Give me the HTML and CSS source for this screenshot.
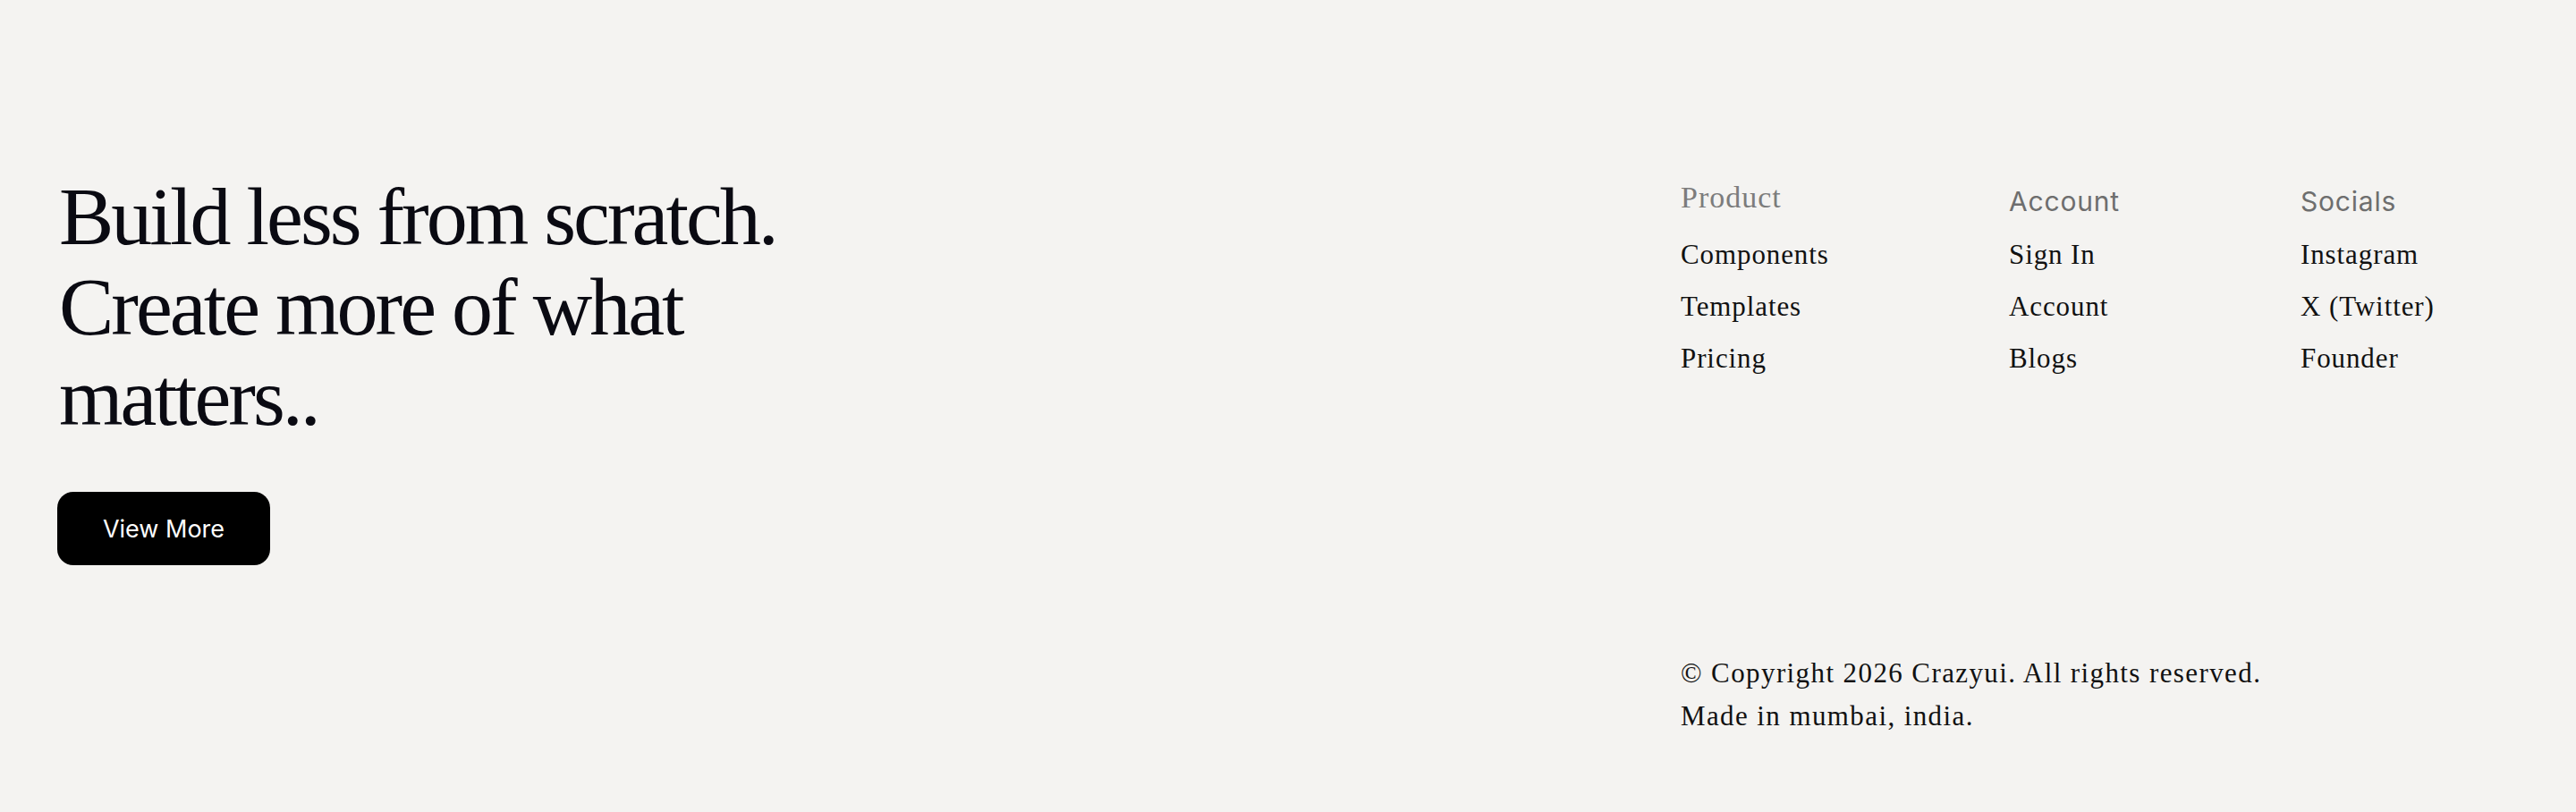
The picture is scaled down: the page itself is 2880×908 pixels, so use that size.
FILE: index.html
```html
<!DOCTYPE html>
<html lang="en">
<head>
<meta charset="utf-8">
<title>Crazyui Footer</title>
<link rel="stylesheet" href="styles.css">
</head>
<body>
<footer class="footer">
  <section class="intro">
    <h1 class="headline">Build less from scratch.<br>Create more of what<br>matters..</h1>
    <a class="btn" href="#">View More</a>
  </section>
  <section class="side">
    <nav class="cols">
      <div class="col">
        <div class="col-title serif">Product</div>
        <ul class="links">
          <li><a href="#">Components</a></li>
          <li><a href="#">Templates</a></li>
          <li><a href="#">Pricing</a></li>
        </ul>
      </div>
      <div class="col">
        <div class="col-title sans">Account</div>
        <ul class="links">
          <li><a href="#">Sign In</a></li>
          <li><a href="#">Account</a></li>
          <li><a href="#">Blogs</a></li>
        </ul>
      </div>
      <div class="col">
        <div class="col-title sans">Socials</div>
        <ul class="links">
          <li><a href="#">Instagram</a></li>
          <li><a href="#">X (Twitter)</a></li>
          <li><a href="#">Founder</a></li>
        </ul>
      </div>
    </nav>
    <div class="legal">
      <p>© Copyright 2026 Crazyui. All rights reserved.</p>
      <p>Made in mumbai, india.</p>
    </div>
  </section>
</footer>
</body>
</html>
```

FILE: styles.css
```css
html, body {
  margin: 0;
  padding: 0;
  background: #f4f3f1;
}

body {
  width: 2880px;
  height: 908px;
  overflow: hidden;
  font-family: "Liberation Serif", "Times New Roman", serif;
  color: #0b0b10;
}

.footer {
  display: flex;
  align-items: flex-start;
  padding: 192px 64px 0 66px;
}

.intro {
  flex: 1;
  display: flex;
  flex-direction: column;
  align-items: flex-start;
}

.headline {
  margin: 0;
  font-family: "Liberation Serif", "Times New Roman", serif;
  font-weight: 400;
  font-size: 92px;
  line-height: 101px;
  letter-spacing: -3px;
  color: #0a0a12;
}

.btn {
  margin-top: 55px;
  margin-left: -2px;
  display: flex;
  align-items: center;
  justify-content: center;
  width: 238px;
  height: 82px;
  box-sizing: border-box;
  border-radius: 18px;
  background: #000;
  color: #fff;
  text-decoration: none;
  font-family: Inter, "Liberation Sans", sans-serif;
  font-size: 27px;
  font-weight: 400;
}

.side {
  width: 937px;
  margin-top: 8px;
}

.cols {
  display: grid;
  grid-template-columns: 367px 326px auto;
}

.col-title {
  line-height: 41px;
  margin-bottom: 15px;
}

.col-title.serif {
  font-family: "Liberation Serif", "Times New Roman", serif;
  font-size: 34px;
  letter-spacing: 1px;
  color: #7c7c7c;
}

.col-title.sans {
  font-family: Inter, "Liberation Sans", sans-serif;
  font-size: 30px;
  letter-spacing: 0.8px;
  color: #6e6e6e;
  padding-top: 5px;
  margin-bottom: 10px;
}

.links {
  list-style: none;
  margin: 0;
  padding: 0;
}

.links li {
  line-height: 58px;
  font-size: 31px;
  letter-spacing: 0.9px;
}

.links a {
  color: #111;
  text-decoration: none;
}

.legal {
  margin-top: 299px;
}

.legal p {
  margin: 0;
  font-size: 31px;
  line-height: 48px;
  letter-spacing: 1.4px;
  color: #111;
}
```
